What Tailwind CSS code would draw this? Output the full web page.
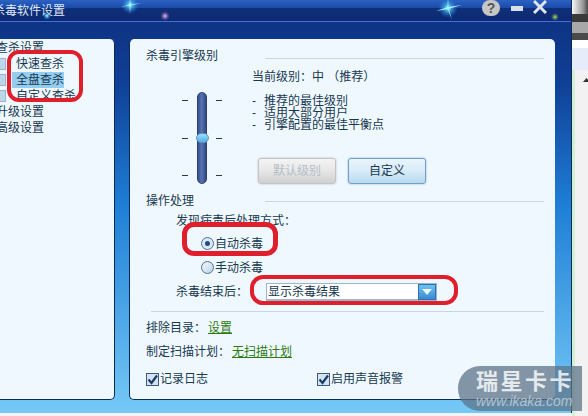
<!DOCTYPE html>
<html lang="zh">
  <head>
    <meta charset="UTF-8" />
    <title>杀毒软件设置</title>
    <script src="https://cdn.jsdelivr.net/npm/@tailwindcss/browser@4"></script>
  </head>
  <body class="relative w-[588px] h-[416px] overflow-hidden bg-[#f2f2f2] font-['Liberation_Sans','Noto_Sans_CJK_SC',sans-serif] text-[12px] leading-[16px] text-[#17384f]">
    <div class="flex h-[416px]">
      <!-- window -->
      <div class="w-[572px] h-[413px] shrink-0 flex flex-col border-r border-[#0b2a5c] bg-[linear-gradient(to_bottom,#0e2f7c_0%,#0f3f96_20%,#1f7fd6_50%,#76c9f6_100%)]">
        <!-- title bar -->
        <div class="h-[22px] shrink-0 flex items-center border-b border-[#3f6fe0] bg-[linear-gradient(to_bottom,#2a62c4_0%,#1c4ba8_36%,#0f2f7a_40%,#0d2a70_100%)]">
          <span class="-ml-[7px] text-[#dfe9f6]">杀毒软件设置</span>
        </div>

        <div class="flex gap-[14px] mt-[17px] h-[361px]">
          <!-- left tree -->
          <div class="w-[115px] overflow-hidden rounded-r-[5px] border-r border-b border-[#0b2a5c] bg-[#f0f8ff] pt-[1px]">
            <div class="-ml-[4px] w-[110px]">
              <div class="h-[16px]">查杀设置</div>
              <div class="flex items-center h-[16px] pl-[4px]"><span class="w-[6px] h-[12px] border border-[#9db4c8] border-l-0 bg-[#bcd6ec]"></span><span class="ml-[10px]">快速查杀</span></div>
              <div class="flex items-center h-[16px] pl-[4px]"><span class="w-[6px] h-[12px] border border-[#9db4c8] border-l-0 bg-[#bcd6ec]"></span><span class="ml-[6px] pl-[4px] bg-[#94cdf0]">全盘查杀</span></div>
              <div class="flex items-center h-[16px] pl-[4px]"><span class="w-[6px] h-[12px] border border-[#9db4c8] border-l-0 bg-[#bcd6ec]"></span><span class="ml-[10px]">自定义查杀</span></div>
              <div class="h-[16px]">升级设置</div>
              <div class="h-[16px]">高级设置</div>
            </div>
          </div>

          <!-- right panel -->
          <div class="w-[426px] rounded-[5px] border-l border-b border-[#0b2a5c] bg-[#f0f8ff] pl-[16px] pt-[9px] flex flex-col">
            <div class="flex items-center h-[16px]">
              <span class="w-[119px]">杀毒引擎级别</span>
              <span class="w-[279px] h-[1px] mt-[4px] bg-[#c9d6e0]"></span>
            </div>

            <div class="flex h-[128px]">
              <!-- level slider -->
              <div class="w-[106px] pl-[36px] pt-[28px] flex items-start">
                <div class="mt-[8px] w-[6px] h-[76px] flex flex-col justify-between"><i class="block h-[1px] bg-[#1f3a5a]"></i><i class="block h-[1px] bg-[#1f3a5a]"></i><i class="block h-[1px] bg-[#1f3a5a]"></i></div>
                <div class="relative ml-[9px] w-[10px] h-[92px] rounded-full border border-[#2c3f78] bg-[linear-gradient(to_right,#36508f,#5a74ad_45%,#2f4888)]">
                  <div class="absolute -left-[2px] top-[40px] w-[13px] h-[10px] rounded-full border border-[#5f93c4] bg-[linear-gradient(to_bottom,#9fdcf8,#4fb2ea)]"></div>
                </div>
                <div class="mt-[8px] ml-[9px] w-[6px] h-[76px] flex flex-col justify-between"><i class="block h-[1px] bg-[#1f3a5a]"></i><i class="block h-[1px] bg-[#1f3a5a]"></i><i class="block h-[1px] bg-[#1f3a5a]"></i></div>
              </div>
              <div class="flex-1 pt-[5px]">
                <div>当前级别：中 （推荐）</div>
                <div class="mt-[10px] leading-[12px]">
                  <div><span class="inline-block w-[12px]">-</span>推荐的最佳级别</div>
                  <div><span class="inline-block w-[12px]">-</span>适用大部分用户</div>
                  <div><span class="inline-block w-[12px]">-</span>引擎配置的最佳平衡点</div>
                </div>
                <div class="flex gap-[12px] mt-[27px] ml-[6px]">
                  <div class="w-[78px] h-[26px] flex items-center justify-center rounded-[3px] border border-[#c4c4c4] bg-[linear-gradient(to_bottom,#f4f4f4,#e6e6e6_50%,#d0d0d0)] text-[#b4bfc8] shadow-[0_0_2px_#b0b0b0]">默认级别</div>
                  <div class="w-[78px] h-[26px] flex items-center justify-center rounded-[3px] border border-[#6f9fc4] bg-[linear-gradient(to_bottom,#eaf5fc,#d8ebf8_50%,#b8daf0)] shadow-[0_0_2px_#7ba8cc]">自定义</div>
                </div>
              </div>
            </div>

            <div class="flex items-center h-[16px] mt-[1px]">
              <span class="w-[119px]">操作处理</span>
              <span class="w-[279px] h-[1px] bg-[#c9d6e0]"></span>
            </div>

            <div class="ml-[30px] mt-[4px]">发现病毒后处理方式：</div>
            <div class="flex items-center ml-[55px] mt-[6px] h-[17px] gap-[1px]">
              <span class="w-[13px] h-[13px] rounded-full border border-[#4f6f94] bg-[#dbe9f6] flex items-center justify-center"><i class="block w-[5px] h-[5px] rounded-full bg-[#1f4d7e]"></i></span>
              <span>自动杀毒</span>
            </div>
            <div class="flex items-center ml-[55px] mt-[7px] h-[17px] gap-[1px]">
              <span class="w-[13px] h-[13px] rounded-full border border-[#4f6f94] bg-[linear-gradient(135deg,#f4f9fd,#bcd3e8)]"></span>
              <span>手动杀毒</span>
            </div>
            <div class="flex items-center ml-[30px] mt-[7px] h-[18px]">
              <span class="w-[90px]">杀毒结束后：</span>
              <div class="w-[171px] h-[18px] flex justify-between border border-[#9cb6d2] border-b-2 bg-white pl-[1px]">
                <span>显示杀毒结果</span>
                <span class="w-[18px] h-[16px] flex items-center justify-center border border-[#2f6fb0] bg-[linear-gradient(to_bottom,#6cc4f2,#3a8ad0)]"><svg width="10" height="6" viewBox="0 0 10 6"><polygon points="0,0 10,0 5,6" fill="#eef7fd" /></svg></span>
              </div>
            </div>
            <div class="ml-[5px] mt-[10px] w-[393px] h-[1px] bg-[#c9d6e0]"></div>

            <div class="flex mt-[8px]">
              <span class="w-[62px]">排除目录：</span>
              <span class="underline text-[#2b7a12]">设置</span>
            </div>
            <div class="flex mt-[8px]">
              <span class="w-[86px]">制定扫描计划：</span>
              <span class="underline text-[#2b7a12]">无扫描计划</span>
            </div>
            <div class="flex mt-[11px] h-[16px]">
              <div class="w-[171px] flex items-center gap-[1px]">
                <span class="w-[13px] h-[13px] border border-[#3d5a86] bg-[#d5e2f2] flex items-center justify-center"><svg width="11" height="11" viewBox="0 0 11 11"><path d="M1.5 5.5 L4.5 9 L10 1.5" fill="none" stroke="#1c3c66" stroke-width="2.2" /></svg></span>
                <span>记录日志</span>
              </div>
              <div class="flex items-center gap-[1px]">
                <span class="w-[13px] h-[13px] border border-[#3d5a86] bg-[#d5e2f2] flex items-center justify-center"><svg width="11" height="11" viewBox="0 0 11 11"><path d="M1.5 5.5 L4.5 9 L10 1.5" fill="none" stroke="#1c3c66" stroke-width="2.2" /></svg></span>
                <span>启用声音报警</span>
              </div>
            </div>
          </div>
        </div>
      </div>

      <!-- sliver of the window behind -->
      <div class="flex-1 flex flex-col">
        <div class="h-[14px] bg-[linear-gradient(to_right,#f8f8f8,#9a9a9a_60%,#2a2a2a)]"></div>
        <div class="h-[8px] bg-[#3a3a3a]"></div>
        <div class="h-[11px] bg-[#a8a8a8]"></div>
        <div class="h-[7px] bg-[#4a4a4a]"></div>
        <div class="h-[8px] bg-white"></div>
        <div class="h-[22px] bg-[#e6ecfa]"></div>
        <div class="flex-1 border-l-[3px] border-[#d4f0d4] bg-[#f2f2f2] pl-[8px] pt-[8px]">
          <svg class="block" width="7" height="4" viewBox="0 0 7 4"><polygon points="3.5,0 7,4 0,4" fill="#333" /></svg>
        </div>
      </div>
    </div>

    <!-- title bar glints and buttons -->
    <svg class="absolute left-0 top-0" width="572" height="22" viewBox="0 0 572 22">
      <defs>
        <radialGradient id="glint"><stop offset="0" stop-color="#e8ffff" /><stop offset="0.3" stop-color="#4fc4f0" stop-opacity="0.8" /><stop offset="1" stop-color="#1f6fd0" stop-opacity="0" /></radialGradient>
        <radialGradient id="pink"><stop offset="0" stop-color="#f0c0e8" /><stop offset="1" stop-color="#8050a0" stop-opacity="0" /></radialGradient>
        <radialGradient id="green"><stop offset="0" stop-color="#b0e070" /><stop offset="1" stop-color="#60a040" stop-opacity="0" /></radialGradient>
      </defs>
      <circle cx="130" cy="5" r="9" fill="url(#glint)" />
      <path d="M130 -4 L130.6 5 L130 14 L129.4 5 Z M120 7 L130 4.5 L142 3 L130 5.5 Z" fill="#a8f0ff" />
      <circle cx="47" cy="16" r="4" fill="url(#glint)" />
      <circle cx="165" cy="16" r="5" fill="url(#pink)" />
      <circle cx="448" cy="8" r="10" fill="url(#glint)" />
      <path d="M448 -4 L448.6 8 L452 20 L447.4 8 Z M436 11 L448 7 L462 5 L448 9 Z" fill="#a8f0ff" />
      <circle cx="555" cy="17" r="4" fill="url(#green)" />
    </svg>
    <div class="absolute left-[482px] top-0 w-[18px] h-[16px] rounded-full bg-[#c6c6c6] text-[#555] text-[14px] font-bold text-center leading-[16px]">?</div>
    <div class="absolute left-[511px] top-[6px] w-[12px] h-[5px] bg-[#d8e0ec]"></div>
    <svg class="absolute left-[533px] top-0" width="14" height="14" viewBox="0 0 14 14"><path d="M1 1 L13 13 M13 1 L1 13" stroke="#dce4ee" stroke-width="3" /></svg>

    <!-- red marker rings drawn over the screenshot -->
    <div class="absolute left-[7px] top-[50px] w-[76px] h-[52px] rounded-[12px] border-[4px] border-[#e01f2d]"></div>
    <div class="absolute left-[182px] top-[222px] w-[96px] h-[34px] rounded-[12px] border-[5px] border-[#e01f2d]"></div>
    <div class="absolute left-[250px] top-[275px] w-[208px] h-[30px] rounded-[13px] border-[4px] border-[#e01f2d]"></div>

    <!-- watermark -->
    <div class="absolute left-[458px] top-[366px] w-[124px] h-[45px] rounded-l-[22px] bg-[#5c7488]/75 pl-[18px] pt-[5px] leading-none">
      <div class="text-[22px] font-bold tracking-[2.5px] whitespace-nowrap text-white/80">瑞星卡卡</div>
      <div class="mt-[1px] text-[#b4c2ce] italic text-[14px] whitespace-nowrap">www.ikaka.com</div>
    </div>
  </body>
</html>
